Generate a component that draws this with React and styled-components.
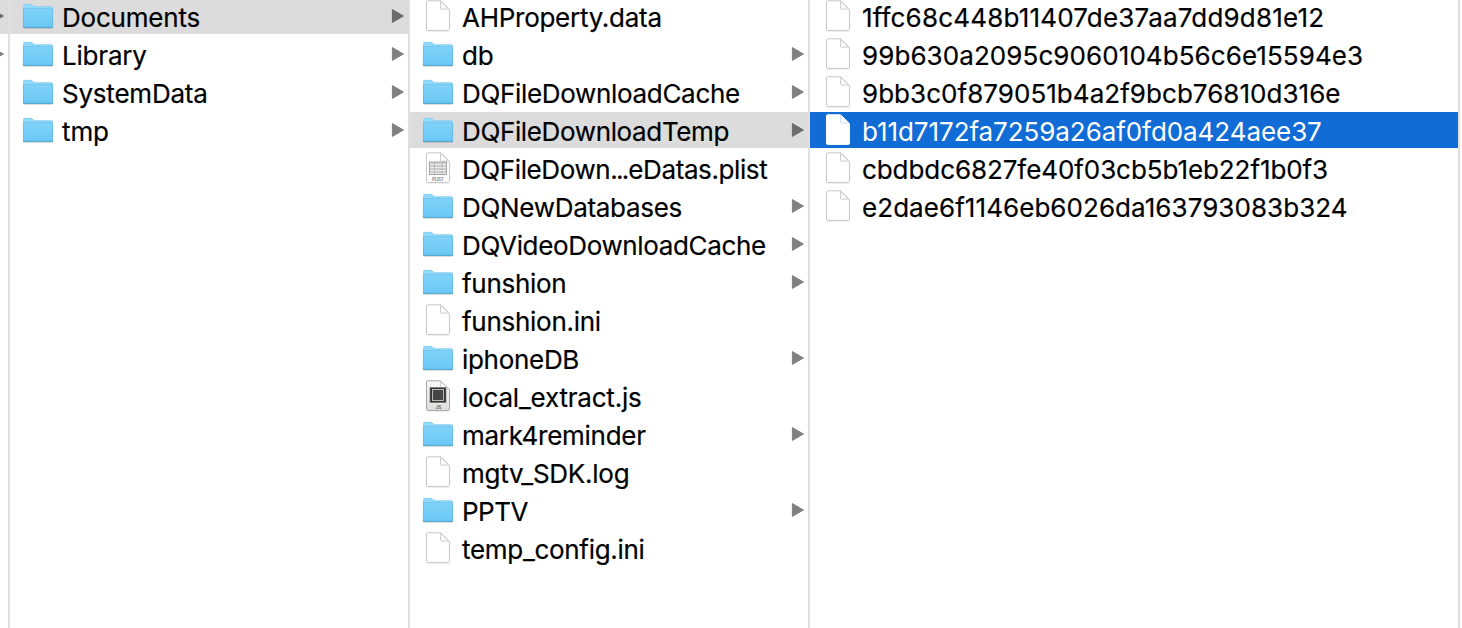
import React from "react";
import styled, { createGlobalStyle } from "styled-components";

const Global = createGlobalStyle`
  html, body { margin: 0; background: #fff; overflow: hidden; }
`;

const Browser = styled.main`
  display: flex;
  width: 1462px;
  height: 628px;
  overflow: hidden;
  background: #fff;
  font-family: Inter, "Liberation Sans", sans-serif;
`;

const Column = styled.ul`
  box-sizing: border-box;
  flex: none;
  display: flex;
  flex-direction: column;
  gap: 2px;
  width: ${(p) => p.$width}px;
  height: 630px;
  margin: -2px 0 0;
  padding: 0;
  list-style: none;
  border-right: 2px solid #dfdfdf;
  overflow: hidden;
`;

const Row = styled.li`
  box-sizing: border-box;
  flex: none;
  display: flex;
  align-items: center;
  justify-content: ${(p) => (p.$clipped ? "flex-end" : "flex-start")};
  height: 36px;
  padding: ${(p) => (p.$clipped ? "0 4px 0 0" : "0 4px 0 12px")};
  color: ${(p) => (p.$state === "active" ? "#fff" : "#000")};
  background: ${(p) =>
    p.$state === "active" ? "#116cd6" : p.$state === "open" ? "#dcdcdc" : "transparent"};
`;

const IconSlot = styled.span`
  flex: none;
  width: 32px;
  height: 36px;
  margin-right: 8px;
  svg { display: block; }
`;

const Label = styled.span`
  flex: 1;
  padding-top: 4px;
  font-size: 26px;
  line-height: 32px;
  letter-spacing: ${(p) => p.$tracking}px;
  -webkit-text-stroke: ${(p) => (p.$light ? 0 : 0.2)}px currentColor;
  white-space: nowrap;
`;

const Ellipsis = styled.span`
  letter-spacing: -1.8px;
  margin-right: 1px;
`;

const Arrow = styled.svg`
  flex: none;
  display: block;
  color: ${(p) => (p.$dark ? "#6c6c6c" : "#808080")};
`;

function Disclosure({ dark }) {
  return (
    <Arrow $dark={dark} width="13" height="36" viewBox="0 0 13 36">
      <path d="M1.4 11.6v12.8L12.4 18z" fill="currentColor" stroke="currentColor" strokeWidth="1" strokeLinejoin="round" />
    </Arrow>
  );
}

function Folder() {
  return (
    <svg width="32" height="36" viewBox="0 0 32 36">
      <defs>
        <linearGradient id="folderFront" x1="0" y1="0" x2="0" y2="1">
          <stop offset="0" stopColor="#80d2f9" />
          <stop offset="1" stopColor="#69c8f6" />
        </linearGradient>
      </defs>
      <path d="M1.5 30.3h29" stroke="#000" strokeOpacity=".17" />
      <path d="M1 7.4Q1 6 2.4 6h6.4q1 0 1.7.9l.9.9q.6.6 1.6.6h16.6q1.4 0 1.4 1.4V29.6H1z" fill="#92dafb" />
      <path d="M1 11h30v18.6H1z" fill="url(#folderFront)" />
      <path d="M1 10.6h30" stroke="#6bbce4" strokeWidth=".7" />
      <path d="M1.3 11v18.2M30.7 11v18.2" stroke="#61b4dc" strokeWidth=".6" />
      <path d="M1 29.4h30" stroke="#519fc4" strokeWidth=".9" />
      <path d="M2.2 6.3h6.6q.9 0 1.6.9l.9.9q.6.6 1.6.6h17.1" fill="none" stroke="#7cc8eb" strokeWidth=".6" />
    </svg>
  );
}

function Page({ kind, active }) {
  return (
    <svg width="32" height="36" viewBox="0 0 32 36">
      <defs>
        <linearGradient id="scriptPaper" x1="0" y1="0" x2="0" y2="1">
          <stop offset="0" stopColor="#f8f8f8" />
          <stop offset="1" stopColor="#dedede" />
        </linearGradient>
      </defs>
      {!active && <path d="M5 32.9h22" stroke="#000" strokeOpacity=".17" />}
      <path
        d="M5.6 2.8h12.2q1 0 1.7.8l7.4 7.2q.6.6.6 1.5v18.9q0 1.2-1.2 1.2H5.6q-1.1 0-1.1-1.2V3.9q0-1.1 1.1-1.1z"
        fill={kind === "js" ? "url(#scriptPaper)" : "#fff"}
        stroke={active ? "#fff" : kind === "js" ? "#a6a6a6" : "#c8c8c8"}
        strokeWidth="1"
      />
      <path
        d="M18.5 3.2v6.8q0 1.1 1.2 1.1h7z"
        fill={kind === "js" ? "#fff" : "#fbfbfb"}
        stroke={active ? "#d3dce8" : "#c8c8c8"}
        strokeWidth=".9"
        strokeLinejoin="round"
      />
      {kind === "plist" && (
        <>
          <rect x="7.5" y="12" width="17" height="12.5" fill="#eee" stroke="#a5a5a5" />
          <path d="M8 13h16M8 16h16M8 19h16M8 22h16" stroke="#a9a9a9" strokeWidth="1.1" />
          <path d="M12.5 12v12M20 12v12" stroke="#b1b1b1" strokeWidth=".8" />
          <text x="16" y="31" textAnchor="middle" fontSize="4.8" fontWeight="600" fill="#858585" textLength="12">PLIST</text>
        </>
      )}
      {kind === "js" && (
        <>
          <rect x="8" y="9.5" width="16" height="15" fill="#333" stroke="#777" strokeWidth=".7" />
          <rect x="10.5" y="11.5" width="11" height="11" fill="#454545" stroke="#c5c5c5" strokeWidth=".9" />
          <text x="16.4" y="30.6" textAnchor="middle" fontSize="4.8" fontWeight="600" fill="#555">JS</text>
        </>
      )}
    </svg>
  );
}

const containers = [
  { name: "Documents", kind: "folder", state: "open", tracking: -0.2 },
  { name: "Library", kind: "folder", tracking: -0.2 },
  { name: "SystemData", kind: "folder", tracking: -0.22 },
  { name: "tmp", kind: "folder", tracking: -0.1 },
];

const documents = [
  { name: "AHProperty.data", kind: "file", tracking: -0.27 },
  { name: "db", kind: "folder", tracking: -0.2 },
  { name: "DQFileDownloadCache", kind: "folder", tracking: -0.32 },
  { name: "DQFileDownloadTemp", kind: "folder", state: "open", tracking: -0.36 },
  { name: "DQFileDown...eDatas.plist", kind: "plist", tracking: -0.4 },
  { name: "DQNewDatabases", kind: "folder", tracking: -0.3 },
  { name: "DQVideoDownloadCache", kind: "folder", tracking: -0.35 },
  { name: "funshion", kind: "folder", tracking: -0.3 },
  { name: "funshion.ini", kind: "file", tracking: -0.28 },
  { name: "iphoneDB", kind: "folder", tracking: -0.3 },
  { name: "local_extract.js", kind: "js", tracking: -0.2 },
  { name: "mark4reminder", kind: "folder", tracking: -0.27 },
  { name: "mgtv_SDK.log", kind: "file", tracking: -0.25 },
  { name: "PPTV", kind: "folder", tracking: -0.5 },
  { name: "temp_config.ini", kind: "file", tracking: -0.3 },
];

const downloads = [
  { name: "1ffc68c448b11407de37aa7dd9d81e12", kind: "file", tracking: 0.18 },
  { name: "99b630a2095c9060104b56c6e15594e3", kind: "file", tracking: 0.08 },
  { name: "9bb3c0f879051b4a2f9bcb76810d316e", kind: "file", tracking: 0.04 },
  { name: "b11d7172fa7259a26af0fd0a424aee37", kind: "file", state: "active", tracking: -0.07 },
  { name: "cbdbdc6827fe40f03cb5b1eb22f1b0f3", kind: "file", tracking: -0.08 },
  { name: "e2dae6f1146eb6026da163793083b324", kind: "file", tracking: 0.06 },
];

function FileName({ name, tracking = 0, light }) {
  const [head, tail] = name.split("...");
  return (
    <Label $tracking={tracking} $light={light}>
      {head}
      {tail && <Ellipsis>...</Ellipsis>}
      {tail}
    </Label>
  );
}

function FileColumn({ items, width }) {
  return (
    <Column $width={width}>
      {items.map((item) => (
        <Row key={item.name} $state={item.state}>
          <IconSlot>
            {item.kind === "folder" ? <Folder /> : <Page kind={item.kind} active={item.state === "active"} />}
          </IconSlot>
          <FileName name={item.name} tracking={item.tracking} light={item.state === "active"} />
          {item.kind === "folder" && <Disclosure dark={item.state === "open"} />}
        </Row>
      ))}
    </Column>
  );
}

export default function App() {
  return (
    <>
      <Global />
      <Browser>
        <Column $width={10}>
          <Row $clipped $state="open"><Disclosure dark /></Row>
          <Row $clipped><Disclosure /></Row>
        </Column>
        <FileColumn items={containers} width={400} />
        <FileColumn items={documents} width={400} />
        <FileColumn items={downloads} width={650} />
      </Browser>
    </>
  );
}
